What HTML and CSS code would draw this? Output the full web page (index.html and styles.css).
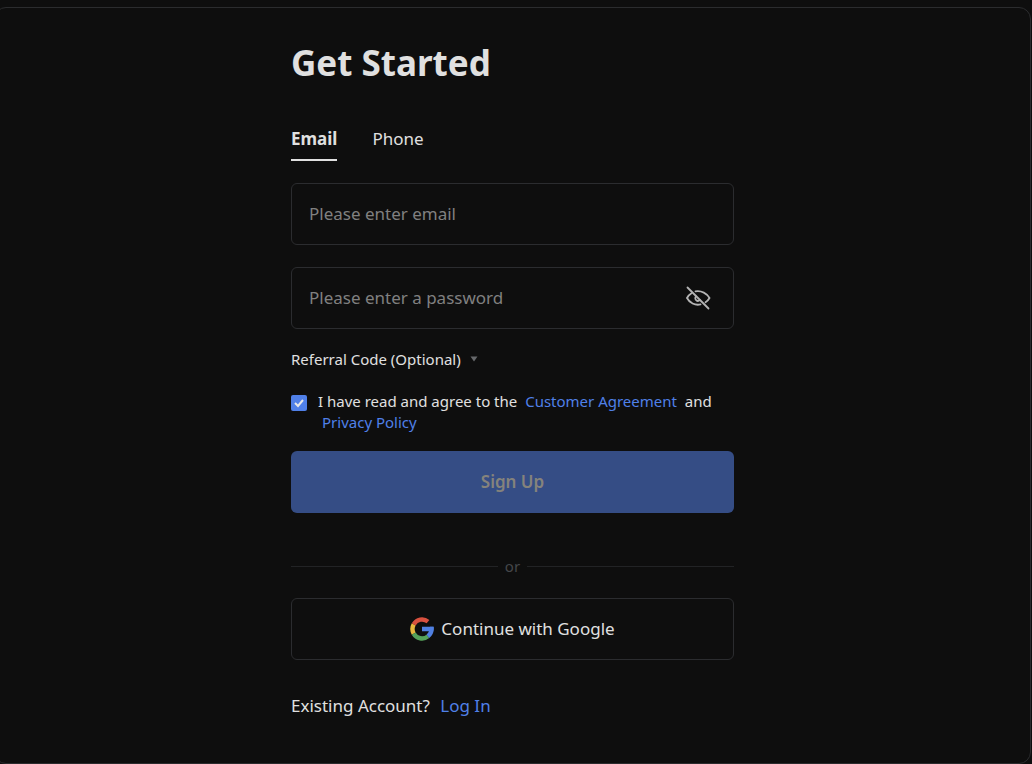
FILE: index.html
```html
<!DOCTYPE html>
<html lang="en">
<head>
<meta charset="utf-8">
<meta name="viewport" content="width=device-width, initial-scale=1">
<title>Get Started</title>
<link rel="stylesheet" href="styles.css">
</head>
<body>
<main class="panel">
  <form class="signup">
    <h1 class="title">Get Started</h1>
    <div class="tabs" role="tablist">
      <button class="tab tab-active" type="button" role="tab" aria-selected="true">Email</button>
      <button class="tab" type="button" role="tab" aria-selected="false">Phone</button>
    </div>
    <div class="field">
      <input class="field-input" type="email" placeholder="Please enter email" aria-label="Email">
    </div>
    <div class="field">
      <input class="field-input" type="password" placeholder="Please enter a password" aria-label="Password">
      <button class="reveal" type="button" aria-label="Show password">
        <svg width="26" height="26" viewBox="0 0 26 26" fill="none" stroke="currentColor" stroke-width="1.8" stroke-linecap="round">
          <path d="M10.500 6.400c6-1 11.500 2.100 14 6.600-1 1.800-2.300 3.200-4 4.300M6.500 8.300C4.500 9.500 3 11 2 13c2.500 4.800 8 7.700 13.500 6.400"/>
          <path d="M11 11.400a2.600 2.600 0 1 0 3.800 3.600"/>
          <path d="M2.500 2.500l21 21"/>
        </svg>
      </button>
    </div>
    <button class="referral" type="button">Referral Code (Optional)
      <svg width="8" height="6" viewBox="0 0 8 6" fill="currentColor"><path d="M.5.5h7L4 5.500z"/></svg>
    </button>
    <div class="consent">
      <input class="check" id="agree" type="checkbox" checked>
      <p class="consent-text"><label for="agree">I have read and agree to the</label> <a class="link policy" href="#">Customer Agreement</a> and <a class="link policy" href="#">Privacy Policy</a></p>
    </div>
    <button class="submit" type="submit" disabled>Sign Up</button>
    <div class="divider">or</div>
    <button class="google" type="button">
      <svg width="24" height="24" viewBox="0 0 24 24" fill="none" stroke-width="4.400">
        <path stroke="#e8b83e" d="M3.700 7.400a9.500 9.500 0 0 0 0 9.200"/>
        <path stroke="#55a35a" d="M3.700 16.600a9.500 9.500 0 0 0 14.200 2.800"/>
        <path stroke="#d9513f" d="M3.700 7.400A9.500 9.500 0 0 1 18 4.600"/>
        <path stroke="#5080e2" d="M17.900 19.400A9.500 9.500 0 0 0 21.500 12H12"/>
        <path fill="#5080e2" d="M20 9.800h3.500l.2 2.200-.4 2.200H20z"/>
      </svg>
      Continue with Google
    </button>
    <p class="login">Existing Account? <a class="link" href="#">Log In</a></p>
  </form>
</main>
</body>
</html>
```
FILE: styles.css
```css
* {
  box-sizing: border-box;
}

body {
  margin: 0;
  background: #0e0e0e;
  color: #e0e0e0;
  font: 17px/24px "Noto Sans", "Open Sans", sans-serif;
}

button,
input {
  margin: 0;
  padding: 0;
  border: 0;
  background: none;
  color: inherit;
  font: inherit;
}

button {
  cursor: pointer;
}

.panel {
  min-height: calc(100vh - 7px);
  margin: 7px 1px 0 -6px;
  padding: 31px 24px 44px;
  border: 1px solid #2b2c2e;
  border-radius: 12px;
}

.signup {
  display: flex;
  flex-direction: column;
  max-width: 443px;
  margin: 0 auto;
}

.title {
  margin: 0 0 40px;
  font-size: 35px;
  line-height: 48px;
  font-weight: 700;
}

.tabs {
  display: flex;
  gap: 35px;
  margin-bottom: 22px;
}

.tab {
  padding-bottom: 8px;
  border-bottom: 2px solid transparent;
}

.tab-active {
  border-bottom-color: #e0e0e0;
  font-weight: 700;
}

.field {
  display: flex;
  align-items: center;
  height: 62px;
  margin-bottom: 22px;
  padding: 0 22px 0 17px;
  border: 1px solid #2b2c2f;
  border-radius: 6px;
}

.field-input {
  flex: 1;
  min-width: 0;
  outline: 0;
}

.field-input::placeholder {
  color: #808080;
  opacity: 1;
}

.reveal {
  display: flex;
  color: #b4b4b4;
}

.referral {
  display: flex;
  align-items: center;
  align-self: flex-start;
  gap: 9px;
  margin: -4px 0 20px;
  font-size: 15px;
}

.referral svg {
  color: #66686b;
}

.consent {
  display: flex;
  gap: 11px;
  margin-bottom: 18px;
  font-size: 15px;
  line-height: 21px;
}

.check {
  appearance: none;
  flex: none;
  width: 16px;
  height: 16px;
  margin-top: 4px;
  border-radius: 2px;
  background: #5080e8 url("data:image/svg+xml,%3Csvg xmlns='http://www.w3.org/2000/svg' viewBox='0 0 16 16'%3E%3Cpath d='M4 8l3 3 5-6' fill='none' stroke='%23e8e8e8' stroke-width='2'/%3E%3C/svg%3E");
}

.consent-text {
  margin: 0;
}

.link {
  color: #5080e8;
  text-decoration: none;
}

.policy {
  margin: 0 4px;
}

.submit {
  height: 62px;
  margin-bottom: 41px;
  border-radius: 6px;
  background: #354d85;
  color: #85837c;
  font-weight: 600;
}

.divider {
  display: flex;
  align-items: center;
  gap: 7px;
  margin-bottom: 20px;
  color: #45474a;
  font-size: 15px;
}

.divider::before,
.divider::after {
  content: "";
  flex: 1;
  height: 1px;
  background: #222325;
}

.google {
  display: flex;
  align-items: center;
  justify-content: center;
  gap: 7px;
  height: 62px;
  margin-bottom: 34px;
  border: 1px solid #2b2c2f;
  border-radius: 6px;
}

.login {
  margin: 0;
}

.login .link {
  margin-left: 6px;
}
```
